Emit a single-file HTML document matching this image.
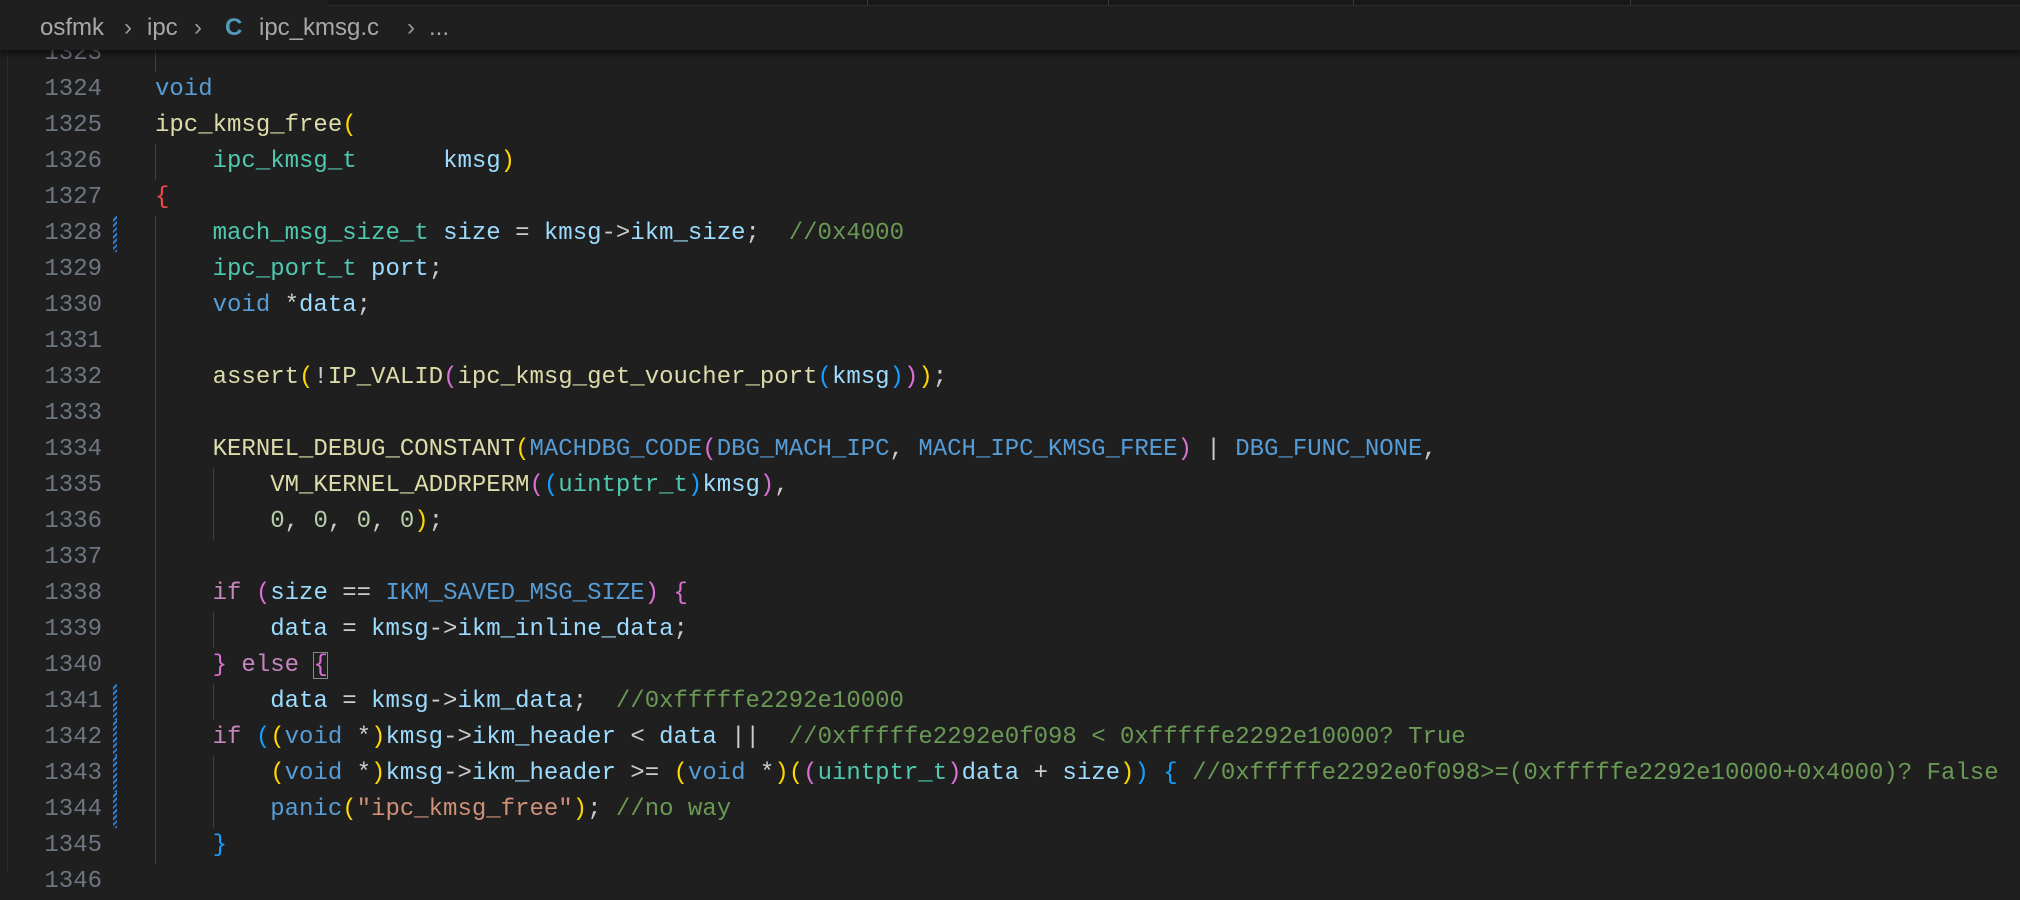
<!DOCTYPE html>
<html><head><meta charset="utf-8"><style>
html,body{margin:0;padding:0;background:#1f1f1f;width:2020px;height:872px;overflow:hidden;}
.ed{position:absolute;left:0;top:0;width:2020px;height:872px;background:#1f1f1f;}
.ln{position:absolute;left:0;width:102px;text-align:right;font:24px "Liberation Mono",monospace;color:#6e7681;line-height:36px;}
.cl{position:absolute;left:155px;font:24px "Liberation Mono",monospace;color:#cccccc;line-height:36px;white-space:pre;}
.g{position:absolute;width:1px;height:36px;background:#404040;}
.d{position:absolute;left:113px;width:4px;height:36px;background:repeating-linear-gradient(-45deg,#2f7fd8 0 2px,transparent 2px 4px);}
.k{color:#569cd6}.f{color:#dcdcaa}.t{color:#4ec9b0}.v{color:#9cdcfe}.c{color:#6a9955}.s{color:#ce9178}.n{color:#b5cea8}.p{color:#c586c0}
.b1{color:#ffd700}.b2{color:#da70d6}.b3{color:#179fff}.r{color:#f44747}
.bc{position:absolute;left:0;top:0;width:2020px;height:50px;background:#1f1f1f;box-shadow:0 4px 6px rgba(0,0,0,.55);font:24px "Liberation Sans",sans-serif;color:#a8a8a8;}
.bc span{position:absolute;top:14px;}
.top{position:absolute;left:328px;top:0;width:1692px;height:5px;background:#181818;border-bottom:1px solid #2b2b2b}
</style></head><body><div class="ed">
<div class="ln" style="top:36px">1323</div>
<div class="g" style="left:155px;top:36px"></div>

<div class="ln" style="top:72px">1324</div><div class="cl" style="top:72px"><span class="k">void</span></div>
<div class="ln" style="top:108px">1325</div><div class="cl" style="top:108px"><span class="f">ipc_kmsg_free</span><span class="b1">(</span></div>
<div class="ln" style="top:144px">1326</div><div class="g" style="left:155px;top:144px"></div><div class="cl" style="top:144px">    <span class="t">ipc_kmsg_t</span>      <span class="v">kmsg</span><span class="b1">)</span></div>
<div class="ln" style="top:180px">1327</div><div class="cl" style="top:180px"><span class="r">{</span></div>
<div class="ln" style="top:216px">1328</div><div class="d" style="top:216px"></div><div class="g" style="left:155px;top:216px"></div><div class="cl" style="top:216px">    <span class="t">mach_msg_size_t</span> <span class="v">size</span> = <span class="v">kmsg</span>-&gt;<span class="v">ikm_size</span>;  <span class="c">//0x4000</span></div>
<div class="ln" style="top:252px">1329</div><div class="g" style="left:155px;top:252px"></div><div class="cl" style="top:252px">    <span class="t">ipc_port_t</span> <span class="v">port</span>;</div>
<div class="ln" style="top:288px">1330</div><div class="g" style="left:155px;top:288px"></div><div class="cl" style="top:288px">    <span class="k">void</span> *<span class="v">data</span>;</div>
<div class="ln" style="top:324px">1331</div><div class="g" style="left:155px;top:324px"></div>
<div class="ln" style="top:360px">1332</div><div class="g" style="left:155px;top:360px"></div><div class="cl" style="top:360px">    <span class="f">assert</span><span class="b1">(</span>!<span class="f">IP_VALID</span><span class="b2">(</span><span class="f">ipc_kmsg_get_voucher_port</span><span class="b3">(</span><span class="v">kmsg</span><span class="b3">)</span><span class="b2">)</span><span class="b1">)</span>;</div>
<div class="ln" style="top:396px">1333</div><div class="g" style="left:155px;top:396px"></div>
<div class="ln" style="top:432px">1334</div><div class="g" style="left:155px;top:432px"></div><div class="cl" style="top:432px">    <span class="f">KERNEL_DEBUG_CONSTANT</span><span class="b1">(</span><span class="k">MACHDBG_CODE</span><span class="b2">(</span><span class="k">DBG_MACH_IPC</span>, <span class="k">MACH_IPC_KMSG_FREE</span><span class="b2">)</span> | <span class="k">DBG_FUNC_NONE</span>,</div>
<div class="ln" style="top:468px">1335</div><div class="g" style="left:155px;top:468px"></div><div class="g" style="left:213px;top:468px"></div><div class="cl" style="top:468px">        <span class="f">VM_KERNEL_ADDRPERM</span><span class="b2">(</span><span class="b3">(</span><span class="t">uintptr_t</span><span class="b3">)</span><span class="v">kmsg</span><span class="b2">)</span>,</div>
<div class="ln" style="top:504px">1336</div><div class="g" style="left:155px;top:504px"></div><div class="g" style="left:213px;top:504px"></div><div class="cl" style="top:504px">        <span class="n">0</span>, <span class="n">0</span>, <span class="n">0</span>, <span class="n">0</span><span class="b1">)</span>;</div>
<div class="ln" style="top:540px">1337</div><div class="g" style="left:155px;top:540px"></div>
<div class="ln" style="top:576px">1338</div><div class="g" style="left:155px;top:576px"></div><div class="cl" style="top:576px">    <span class="p">if</span> <span class="b2">(</span><span class="v">size</span> == <span class="k">IKM_SAVED_MSG_SIZE</span><span class="b2">)</span> <span class="b2">{</span></div>
<div class="ln" style="top:612px">1339</div><div class="g" style="left:155px;top:612px"></div><div class="g" style="left:213px;top:612px"></div><div class="cl" style="top:612px">        <span class="v">data</span> = <span class="v">kmsg</span>-&gt;<span class="v">ikm_inline_data</span>;</div>
<div class="ln" style="top:648px">1340</div><div class="g" style="left:155px;top:648px"></div><div class="cl" style="top:648px">    <span class="b2">}</span> <span class="p">else</span> <span class="b2" style="outline:1px solid #888;outline-offset:-1px">{</span></div>
<div class="ln" style="top:684px">1341</div><div class="d" style="top:684px"></div><div class="g" style="left:155px;top:684px"></div><div class="g" style="left:213px;top:684px"></div><div class="cl" style="top:684px">        <span class="v">data</span> = <span class="v">kmsg</span>-&gt;<span class="v">ikm_data</span>;  <span class="c">//0xfffffe2292e10000</span></div>
<div class="ln" style="top:720px">1342</div><div class="d" style="top:720px"></div><div class="g" style="left:155px;top:720px"></div><div class="cl" style="top:720px">    <span class="p">if</span> <span class="b3">(</span><span class="b1">(</span><span class="k">void</span> *<span class="b1">)</span><span class="v">kmsg</span>-&gt;<span class="v">ikm_header</span> &lt; <span class="v">data</span> ||  <span class="c">//0xfffffe2292e0f098 &lt; 0xfffffe2292e10000? True</span></div>
<div class="ln" style="top:756px">1343</div><div class="d" style="top:756px"></div><div class="g" style="left:155px;top:756px"></div><div class="g" style="left:213px;top:756px"></div><div class="cl" style="top:756px">        <span class="b1">(</span><span class="k">void</span> *<span class="b1">)</span><span class="v">kmsg</span>-&gt;<span class="v">ikm_header</span> &gt;= <span class="b1">(</span><span class="k">void</span> *<span class="b1">)(</span><span class="b2">(</span><span class="t">uintptr_t</span><span class="b2">)</span><span class="v">data</span> + <span class="v">size</span><span class="b1">)</span><span class="b3">)</span> <span class="b3">{</span> <span class="c">//0xfffffe2292e0f098&gt;=(0xfffffe2292e10000+0x4000)? False</span></div>
<div class="ln" style="top:792px">1344</div><div class="d" style="top:792px"></div><div class="g" style="left:155px;top:792px"></div><div class="g" style="left:213px;top:792px"></div><div class="cl" style="top:792px">        <span class="k">panic</span><span class="b1">(</span><span class="s">"ipc_kmsg_free"</span><span class="b1">)</span>; <span class="c">//no way</span></div>
<div class="ln" style="top:828px">1345</div><div class="g" style="left:155px;top:828px"></div><div class="cl" style="top:828px">    <span class="b3">}</span></div>
<div class="ln" style="top:864px">1346</div>
<div style="position:absolute;left:7px;top:0;width:1px;height:872px;background:#2b2b2b"></div>

<div class="bc">
<div class="top"></div>
<div style="position:absolute;left:867px;top:0;width:1px;height:5px;background:#3a3a3a"></div>
<div style="position:absolute;left:1108px;top:0;width:1px;height:5px;background:#3a3a3a"></div>
<div style="position:absolute;left:1353px;top:0;width:1px;height:5px;background:#3a3a3a"></div>
<div style="position:absolute;left:1630px;top:0;width:1px;height:5px;background:#3a3a3a"></div>
<span style="left:40px">osfmk</span><span style="left:124px;color:#999">›</span>
<span style="left:147px">ipc</span><span style="left:194px;color:#999">›</span>
<span style="left:225px;color:#519aba;font-weight:bold">C</span>
<span style="left:259px">ipc_kmsg.c</span><span style="left:407px;color:#999">›</span>
<span style="left:429px">...</span>
</div>
</div></body></html>
